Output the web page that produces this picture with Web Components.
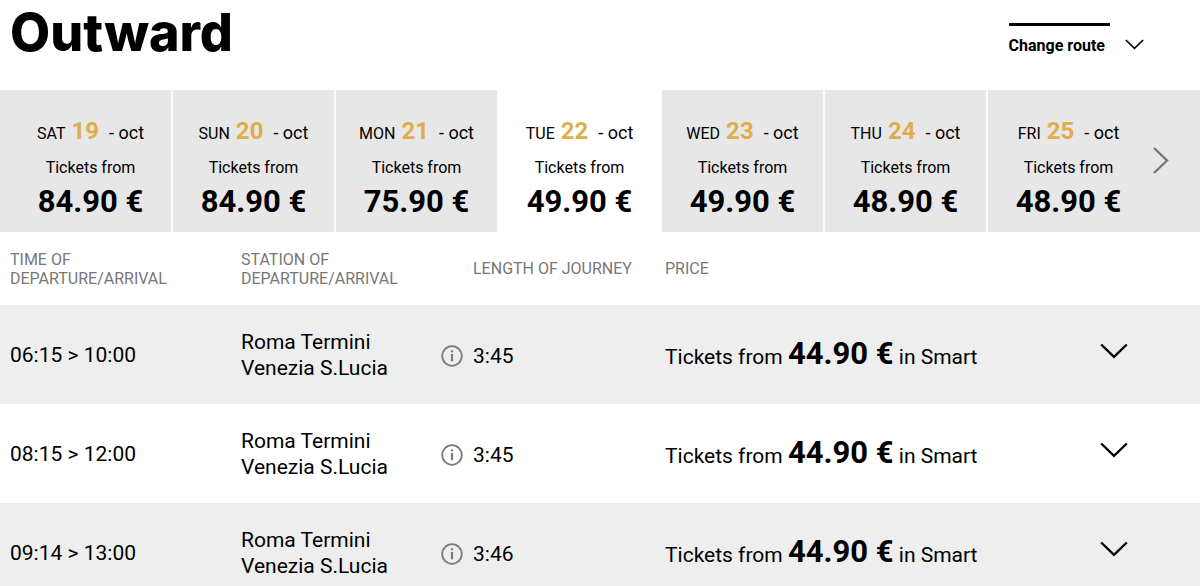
<!DOCTYPE html>
<html lang="en">
<head>
<meta charset="utf-8">
<title>Outward journey</title>
<style>
body { margin: 0; background: #fff; color: #000; font-family: Roboto, sans-serif; font-size: 16px; }
</style>
</head>
<body>
<journey-page>
  <page-header>Outward<span slot="action">Change route</span></page-header>
  <day-strip>
    <day-card day="SAT" date="19" price="84.90 €"></day-card>
    <day-card day="SUN" date="20" price="84.90 €"></day-card>
    <day-card day="MON" date="21" price="75.90 €"></day-card>
    <day-card day="TUE" date="22" price="49.90 €" active></day-card>
    <day-card day="WED" date="23" price="49.90 €"></day-card>
    <day-card day="THU" date="24" price="48.90 €"></day-card>
    <day-card day="FRI" date="25" price="48.90 €"></day-card>
  </day-strip>
  <journey-table></journey-table>
</journey-page>

<script>
function define(name, html, setup) {
  const template = document.createElement('template');
  template.innerHTML = html;
  customElements.define(name, class extends HTMLElement {
    connectedCallback() {
      if (this.shadowRoot) return;
      const root = this.attachShadow({ mode: 'open' });
      root.append(template.content.cloneNode(true));
      if (setup) setup(this, root);
    }
  });
}

define('journey-page', `
<style>:host { display: block; }</style>
<main><slot></slot></main>`);

define('chevron-icon', `
<style>
:host { display: inline-block; width: 28px; line-height: 0; }
svg { width: 100%; overflow: visible; }
</style>
<svg viewBox="0 0 28 16" fill="none" stroke="currentColor" stroke-width="2.4" aria-hidden="true"><path d="M1.2 1.5 14 13.9 26.8 1.5"/></svg>`);

define('info-icon', `
<style>
:host { display: block; width: 22px; height: 22px; color: #7b7b7b; }
svg { display: block; }
</style>
<svg width="22" height="22" viewBox="0 0 22 22" fill="none" stroke="currentColor" aria-hidden="true">
  <circle cx="11" cy="11" r="9.8" stroke-width="1.8"/>
  <path d="M11 9v7.3" stroke-width="2.2"/><path d="M11 5.3v2" stroke-width="2.2"/>
</svg>`);

define('page-header', `
<style>
:host { display: flex; justify-content: space-between; align-items: flex-start; height: 90px; padding: 0 56px 0 10px; box-sizing: border-box; }
h1 { margin: 0; font: 800 52px/66px Inter, sans-serif; }
button { display: flex; align-items: flex-start; gap: 15px; margin-top: 23px; padding: 0; border: 0; background: none; color: #000; font: 700 16px/20px Roboto, sans-serif; cursor: pointer; }
.label { border-top: 3px solid #000; padding: 10px 5px 0 0; white-space: nowrap; }
chevron-icon { width: 19px; padding-top: 16px; }
</style>
<h1><slot></slot></h1>
<button type="button"><span class="label"><slot name="action"></slot></span><chevron-icon></chevron-icon></button>`);

define('day-strip', `
<style>
:host { display: grid; grid-template-columns: 1fr 50px; padding-left: 9px; background: #e7e7e7; }
.days { display: grid; grid-template-columns: repeat(7, 1fr); }
button { display: flex; align-items: center; justify-content: flex-start; border: 0; padding: 0 0 2px 2px; background: none; color: #777; cursor: pointer; }
</style>
<div class="days"><slot></slot></div>
<button type="button" aria-label="Later days">
  <svg width="18" height="28" viewBox="0 0 18 28" fill="none" stroke="currentColor" stroke-width="2.4" aria-hidden="true"><path d="M2 2 15 14.5 2 27"/></svg>
</button>`);

define('day-card', `
<style>
:host { display: block; border: solid #fafafa; border-width: 0 1px; }
:host(:first-child) { border-left-color: transparent; }
:host(:last-child) { border-right-color: transparent; }
:host([active]) { background: #fff; border-color: #fff; }
button { display: block; width: 100%; padding: 27px 0 14px; border: 0; background: none; color: #000; font: 16px/20px Roboto, sans-serif; text-align: center; white-space: nowrap; cursor: pointer; }
.date, .from, .price { display: block; }
.date { line-height: 28px; }
.number { color: #dfad4b; font-size: 24px; font-weight: 700; margin: 0 10px 0 6px; }
.month { font-size: 18px; }
.from { padding-top: 10px; }
.price { font-size: 31px; font-weight: 700; line-height: 40px; padding-top: 4px; height: 36px; }
</style>
<button type="button"><span class="date"><span class="day"></span><span class="number"></span><span class="month">- oct</span></span><span class="from">Tickets from</span><span class="price"></span></button>`,
(host, root) => {
  root.querySelector('.day').textContent = host.getAttribute('day');
  root.querySelector('.number').textContent = host.getAttribute('date');
  root.querySelector('.price').textContent = host.getAttribute('price');
  root.querySelector('button').setAttribute('aria-pressed', host.hasAttribute('active'));
});

const journeys = [
  ['06:15 > 10:00', '3:45', '44.90 €'],
  ['08:15 > 12:00', '3:45', '44.90 €'],
  ['09:14 > 13:00', '3:46', '44.90 €']
];

define('journey-table', `
<style>
:host { display: block; }
table { width: 100%; table-layout: fixed; border-collapse: collapse; font-size: 21px; line-height: 26px; }
th, td { padding: 0 0 0 10px; text-align: left; vertical-align: middle; }
th { height: 73px; font-size: 16px; font-weight: 400; line-height: 19px; color: #777; white-space: nowrap; }
th.length { padding-left: 42px; }
tbody td { height: 99px; white-space: nowrap; }
tbody tr:nth-child(odd) { background: #eee; }
.duration { display: flex; align-items: center; gap: 10px; padding-top: 2px; }
.fare { padding-top: 2px; }
strong { font-size: 31px; }
td.open { padding: 0; text-align: center; }
td button { padding: 0; border: 0; background: none; color: #000; cursor: pointer; }
td chevron-icon { display: block; padding-bottom: 12px; }
</style>
<table>
  <colgroup><col style="width:231px"><col style="width:200px"><col style="width:224px"><col><col style="width:172px"></colgroup>
  <thead><tr><th scope="col">TIME OF<br>DEPARTURE/ARRIVAL</th><th scope="col">STATION OF<br>DEPARTURE/ARRIVAL</th><th scope="col" class="length">LENGTH OF JOURNEY</th><th scope="col">PRICE</th><td></td></tr></thead>
  <tbody></tbody>
</table>`,
(host, root) => {
  root.querySelector('tbody').innerHTML = journeys.map(([time, length, price]) => `
    <tr>
      <td>${time.replace('>', '&gt;')}</td>
      <td>Roma Termini<br>Venezia S.Lucia</td>
      <td><div class="duration"><info-icon></info-icon><span>${length}</span></div></td>
      <td><div class="fare">Tickets from <strong>${price}</strong> in Smart</div></td>
      <td class="open"><button type="button" aria-label="Show fares"><chevron-icon></chevron-icon></button></td>
    </tr>`).join('');
});
</script>
</body>
</html>
